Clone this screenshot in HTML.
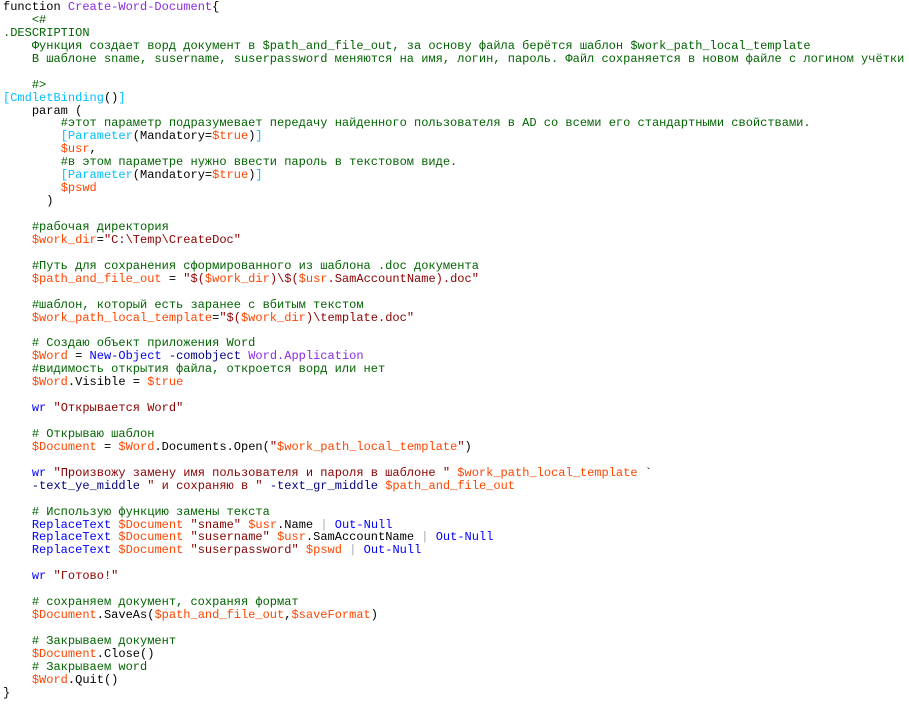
<!DOCTYPE html>
<html><head><meta charset="utf-8">
<style>
html,body{margin:0;padding:0;background:#fff;width:909px;height:705px;overflow:hidden}
pre{margin:0;position:absolute;left:3px;top:1px;font-family:"Liberation Mono","DejaVu Sans Mono",monospace;font-size:12.02px;line-height:12.93px;color:#000;white-space:pre}
.c{color:#006400}.v{color:#ff4500}.s{color:#8b0000}.k{color:#0000ff}.p{color:#000080}.t{color:#8a2be2}.a{color:#00bfff}.o{color:#a9a9a9}.f{color:#8a2be2}
</style></head><body>
<pre>function <span class="f">Create-Word-Document</span>{
<span class="c">    &lt;#
.DESCRIPTION
    Функция создает ворд документ в $path_and_file_out, за основу файла берётся шаблон $work_path_local_template
    В шаблоне sname, susername, suserpassword меняются на имя, логин, пароль. Файл сохраняется в новом файле с логином учётки

    #&gt;</span>
<span class="a">[CmdletBinding</span>()<span class="a">]</span>
    param (
        <span class="c">#этот параметр подразумевает передачу найденного пользователя в AD со всеми его стандартными свойствами.</span>
        <span class="a">[Parameter</span>(Mandatory=<span class="v">$true</span>)<span class="a">]</span>
        <span class="v">$usr</span>,
        <span class="c">#в этом параметре нужно ввести пароль в текстовом виде.</span>
        <span class="a">[Parameter</span>(Mandatory=<span class="v">$true</span>)<span class="a">]</span>
        <span class="v">$pswd</span>
      )

    <span class="c">#рабочая директория</span>
    <span class="v">$work_dir</span>=<span class="s">"C:\Temp\CreateDoc"</span>

    <span class="c">#Путь для сохранения сформированного из шаблона .doc документа</span>
    <span class="v">$path_and_file_out</span> = <span class="s">"$(</span><span class="v">$work_dir</span><span class="s">)\$(</span><span class="v">$usr</span><span class="s">.SamAccountName).doc"</span>

    <span class="c">#шаблон, который есть заранее с вбитым текстом</span>
    <span class="v">$work_path_local_template</span>=<span class="s">"$(</span><span class="v">$work_dir</span><span class="s">)\template.doc"</span>

    <span class="c"># Создаю объект приложения Word</span>
    <span class="v">$Word</span> = <span class="k">New-Object</span> <span class="p">-comobject</span> <span class="t">Word.Application</span>
    <span class="c">#видимость открытия файла, откроется ворд или нет</span>
    <span class="v">$Word</span>.Visible = <span class="v">$true</span>

    <span class="k">wr</span> <span class="s">"Открывается Word"</span>

    <span class="c"># Открываю шаблон</span>
    <span class="v">$Document</span> = <span class="v">$Word</span>.Documents.Open(<span class="s">"</span><span class="v">$work_path_local_template</span><span class="s">"</span>)

    <span class="k">wr</span> <span class="s">"Произвожу замену имя пользователя и пароля в шаблоне "</span> <span class="v">$work_path_local_template</span> `
    <span class="p">-text_ye_middle</span> <span class="s">" и сохраняю в "</span> <span class="p">-text_gr_middle</span> <span class="v">$path_and_file_out</span>

    <span class="c"># Использую функцию замены текста</span>
    <span class="k">ReplaceText</span> <span class="v">$Document</span> <span class="s">"sname"</span> <span class="v">$usr</span>.Name <span class="o">|</span> <span class="k">Out-Null</span>
    <span class="k">ReplaceText</span> <span class="v">$Document</span> <span class="s">"susername"</span> <span class="v">$usr</span>.SamAccountName <span class="o">|</span> <span class="k">Out-Null</span>
    <span class="k">ReplaceText</span> <span class="v">$Document</span> <span class="s">"suserpassword"</span> <span class="v">$pswd</span> <span class="o">|</span> <span class="k">Out-Null</span>

    <span class="k">wr</span> <span class="s">"Готово!"</span>

    <span class="c"># сохраняем документ, сохраняя формат</span>
    <span class="v">$Document</span>.SaveAs(<span class="v">$path_and_file_out</span>,<span class="v">$saveFormat</span>)

    <span class="c"># Закрываем документ</span>
    <span class="v">$Document</span>.Close()
    <span class="c"># Закрываем word</span>
    <span class="v">$Word</span>.Quit()
}</pre>
</body></html>
